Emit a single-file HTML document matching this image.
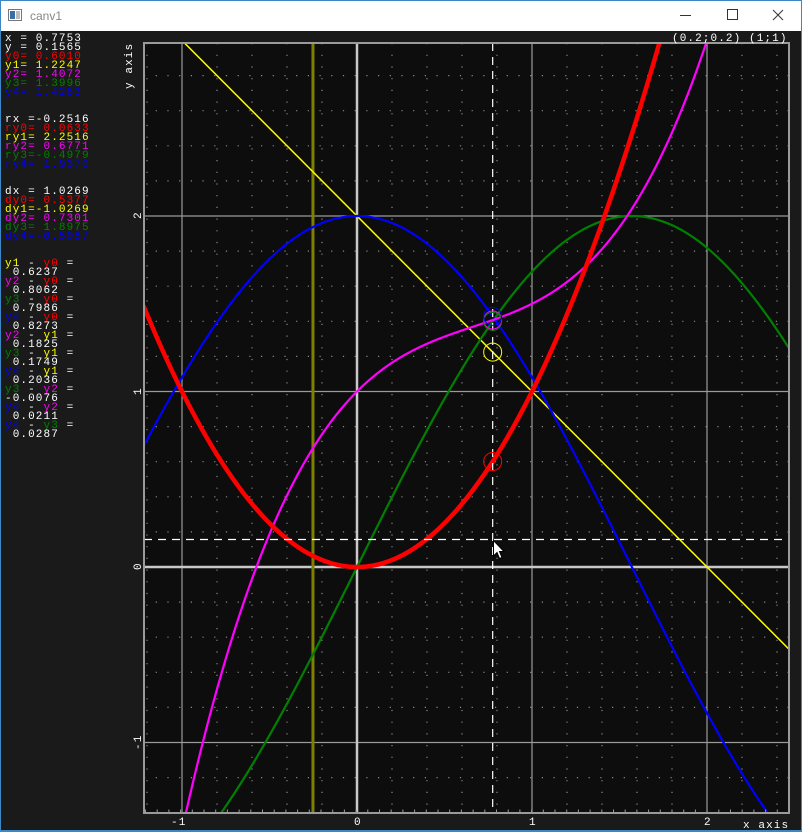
<!DOCTYPE html>
<html><head><meta charset="utf-8"><style>
html,body{margin:0;padding:0;width:802px;height:832px;overflow:hidden;background:#1a1a1a}
svg{display:block}
svg text{font-family:"Liberation Mono",monospace;white-space:pre}
</style></head><body>
<svg id="s" width="802" height="832" viewBox="0 0 802 832" xmlns="http://www.w3.org/2000/svg">
<rect x="0" y="0" width="802" height="832" fill="#1a1a1a"/>
<rect x="0" y="0" width="802" height="31" fill="#ffffff"/>
<rect x="0" y="0" width="802" height="1" fill="#3a88c8"/>
<rect x="0" y="0" width="1" height="832" fill="#3a88c8"/>
<rect x="801" y="0" width="1" height="832" fill="#3a88c8"/>
<rect x="0" y="830" width="802" height="2" fill="#3a88c8"/>
<rect x="8.5" y="9.5" width="13" height="11" fill="#fff" stroke="#777"/>
<rect x="10" y="11" width="5" height="8" fill="#3a6ea5"/>
<rect x="16" y="11" width="4" height="8" fill="#bbb"/>
<text x="30" y="20" style="font-family:'Liberation Sans',sans-serif;font-size:12px" fill="#888">canv1</text>
<line x1="680" y1="15.5" x2="691" y2="15.5" stroke="#333" stroke-width="1"/>
<rect x="727.5" y="9.5" width="10" height="10" fill="none" stroke="#333"/>
<path d="M773 10 L783 20 M783 10 L773 20" stroke="#333" stroke-width="1"/>
<rect x="144" y="43" width="645" height="770" fill="#0d0d0d"/>
<defs><clipPath id="c"><rect x="144" y="43" width="645" height="770"/></clipPath></defs>
<g id="grid" clip-path="url(#c)"></g>
<g id="curves" clip-path="url(#c)"></g>
<rect x="144" y="43" width="645" height="770" fill="none" stroke="#9a9a9a" stroke-width="2"/>
<line x1="145" y1="811" x2="788" y2="811" stroke="#9a9a9a" stroke-width="3" stroke-dasharray="1 10.7"/>
<g fill="#fff" font-size="11" letter-spacing="1.1">
<text x="672" y="41">(0.2;0.2) (1;1)</text>
<text x="743" y="828">x axis</text>
<text x="171" y="825">-1</text>
<text x="354" y="825">0</text>
<text x="529" y="825">1</text>
<text x="704" y="825">2</text>
<text transform="translate(132,89) rotate(-90)">y axis</text>
<text transform="translate(141,219) rotate(-90)">2</text>
<text transform="translate(141,395) rotate(-90)">1</text>
<text transform="translate(141,570) rotate(-90)">0</text>
<text transform="translate(141,750) rotate(-90)">-1</text>
</g>
<g font-size="11" letter-spacing="1.1" id="left"></g>
<path d="M493.5 540.5 L493.5 556 L497 552.5 L499.5 558.5 L502 557.5 L499.5 551.5 L504 551.5 Z" fill="#fff" stroke="#000" stroke-width="1"/>
</svg>
<script>
var NS="http://www.w3.org/2000/svg";
function el(p,n,a){var e=document.createElementNS(NS,n);for(var k in a)e.setAttribute(k,a[k]);p.appendChild(e);return e}
var X=function(x){return 357+175*x},Y=function(y){return 567-175.5*y};
var g=document.getElementById('grid');
for(var k=-6;k<=12;k++){var x=k*0.2;if(k%5==0)continue;el(g,'line',{x1:X(x),y1:43,x2:X(x),y2:813,stroke:'#8a8a8a','stroke-width':1.2,'stroke-dasharray':'1.2 10.5'})}
for(var k=-7;k<=14;k++){var y=k*0.2;if(k%5==0)continue;el(g,'line',{x1:144,y1:Y(y),x2:789,y2:Y(y),stroke:'#8a8a8a','stroke-width':1.2,'stroke-dasharray':'1.2 10.5'})}
[-1,1,2].forEach(function(v){el(g,'line',{x1:X(v),y1:43,x2:X(v),y2:813,stroke:'#9a9a9a','stroke-width':1.2});el(g,'line',{x1:144,y1:Y(v),x2:789,y2:Y(v),stroke:'#9a9a9a','stroke-width':1.2})});
el(g,'line',{x1:X(0),y1:43,x2:X(0),y2:813,stroke:'#c8c8c8','stroke-width':2.5});
el(g,'line',{x1:144,y1:Y(0),x2:789,y2:Y(0),stroke:'#c8c8c8','stroke-width':2.5});
var c=document.getElementById('curves');
el(c,'line',{x1:X(-0.2516),y1:43,x2:X(-0.2516),y2:813,stroke:'#808000','stroke-width':3});
function P(f){var d='';for(var i=0;i<=700;i++){var x=-1.22+3.72*i/700;d+=(i?'L':'M')+X(x).toFixed(2)+','+Y(f(x)).toFixed(2)}return d}
el(c,'path',{d:P(function(x){return 2-x}),stroke:'#ffff00','stroke-width':1.5,fill:'none'});
el(c,'path',{d:P(function(x){return 2*Math.sin(x)}),stroke:'#008000','stroke-width':2.2,fill:'none'});
el(c,'path',{d:P(function(x){return 2*Math.cos(x)}),stroke:'#0000ff','stroke-width':2.2,fill:'none'});
el(c,'path',{d:P(function(x){return 1+x-x*x+x*x*x/2}),stroke:'#ff00ff','stroke-width':2.2,fill:'none'});
el(c,'path',{d:P(function(x){return x*x}),stroke:'#ff0000','stroke-width':4.5,fill:'none'});
var cx=X(0.7753);
el(c,'line',{x1:cx,y1:43,x2:cx,y2:813,stroke:'#fff','stroke-width':1.2,'stroke-dasharray':'8 6'});
el(c,'line',{x1:144,y1:Y(0.1565),x2:789,y2:Y(0.1565),stroke:'#fff','stroke-width':1.2,'stroke-dasharray':'8 6'});
[[0.6010,'#ff0000'],[1.2247,'#ffff00'],[1.4072,'#ff00ff'],[1.3996,'#008000'],[1.4283,'#0000ff']].forEach(function(p){el(c,'circle',{cx:cx,cy:Y(p[0]),r:9,fill:'none',stroke:p[1],'stroke-width':1})});
var W='#ffffff',R='#ff0000',Yl='#ffff00',M='#ff00ff',G='#008000',B='#0000ff';
var L={0:[['x = 0.7753',W]],1:[['y = 0.1565',W]],2:[['y0= 0.6010',R]],3:[['y1= 1.2247',Yl]],4:[['y2= 1.4072',M]],5:[['y3= 1.3996',G]],6:[['y4= 1.4283',B]],
9:[['rx =-0.2516',W]],10:[['ry0= 0.0633',R]],11:[['ry1= 2.2516',Yl]],12:[['ry2= 0.6771',M]],13:[['ry3=-0.4979',G]],14:[['ry4= 1.9370',B]],
17:[['dx = 1.0269',W]],18:[['dy0= 0.5377',R]],19:[['dy1=-1.0269',Yl]],20:[['dy2= 0.7301',M]],21:[['dy3= 1.8975',G]],22:[['dy4=-0.5087',B]]};
var cols={y0:R,y1:Yl,y2:M,y3:G,y4:B};
var pairs=[['y1','y0','0.6237'],['y2','y0','0.8062'],['y3','y0','0.7986'],['y4','y0','0.8273'],['y2','y1','0.1825'],['y3','y1','0.1749'],['y4','y1','0.2036'],['y3','y2','-0.0076'],['y4','y2','0.0211'],['y4','y3','0.0287']];
pairs.forEach(function(p,i){var k=25+2*i;L[k]=[[p[0],cols[p[0]]],[' - ',W],[p[1],cols[p[1]]],[' =',W]];L[k+1]=[[(p[2][0]=='-'?'':' ')+p[2],W]]});
var lg=document.getElementById('left');
for(var k in L){var t=el(lg,'text',{x:5,y:41+9*k});L[k].forEach(function(s){var ts=el(t,'tspan',{fill:s[1]});ts.textContent=s[0]})}
</script>
</body></html>
